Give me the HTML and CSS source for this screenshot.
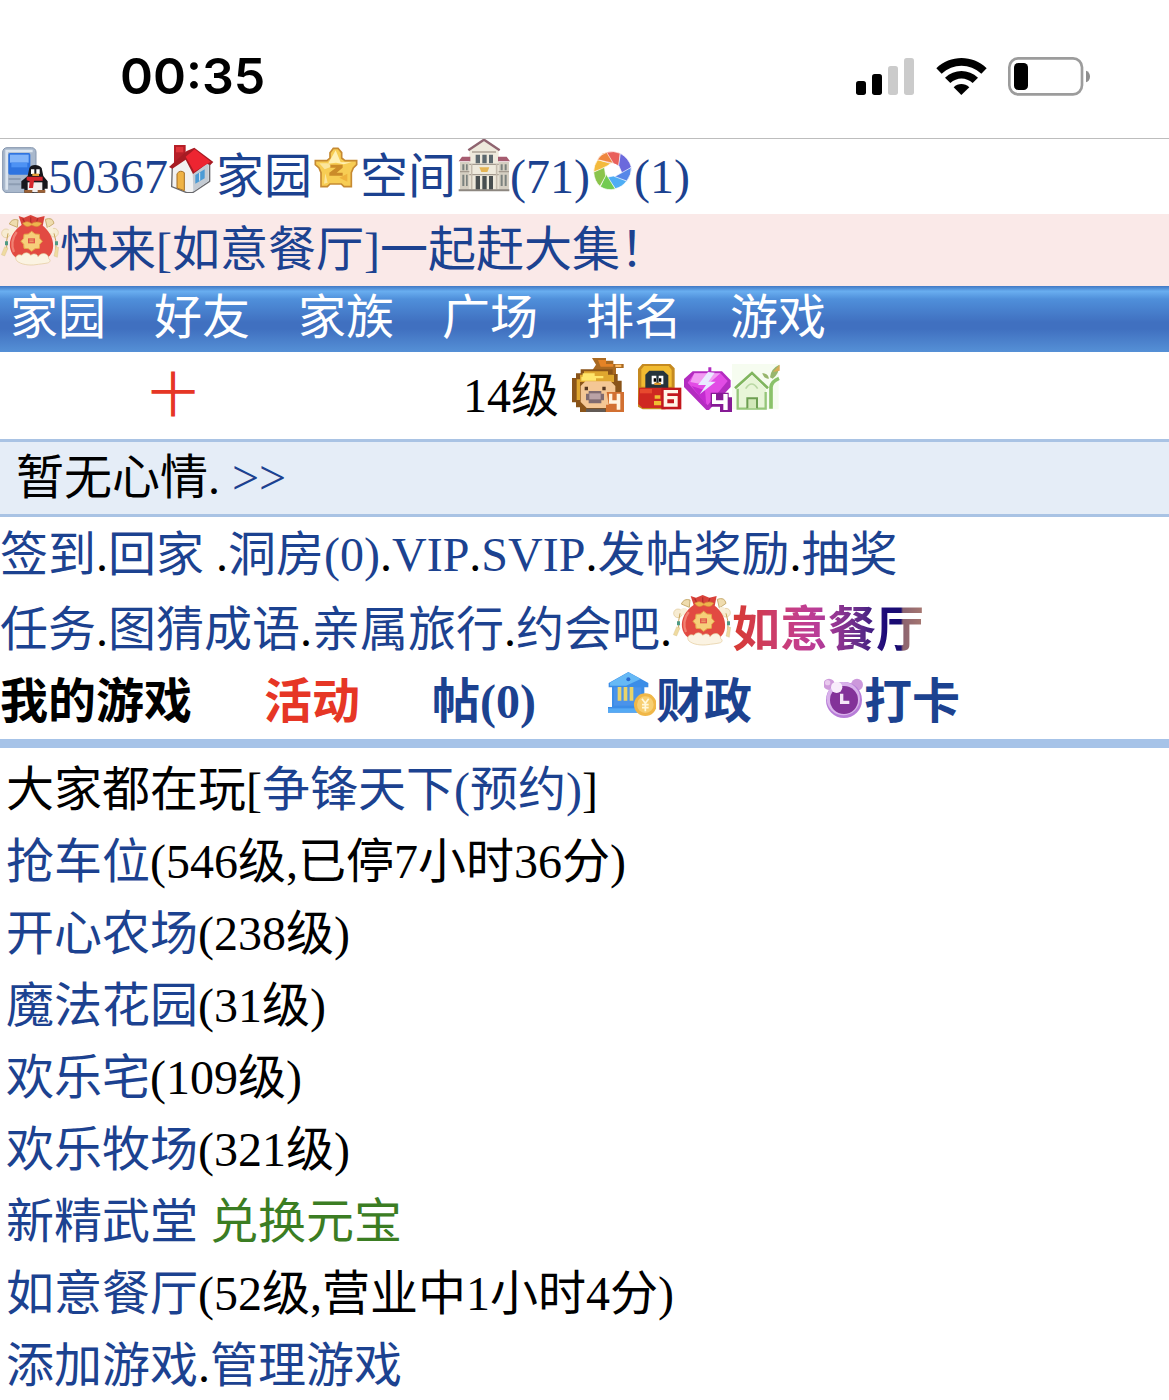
FILE: index.html
```
<!DOCTYPE html>
<html lang="zh-CN">

<head>
<title>家园</title>
<meta charset="UTF-8">
<meta name="viewport" content="width=device-width">
<link rel="stylesheet" href="styles.css">
</head>

<body>

	<svg class="defs" aria-hidden="true">
		<symbol id="bag" viewBox="0 252 180 156">
			<path d="M28 282q8-18 26-12l-2 22zM136 268q22-8 26 12l-20 14z" fill="#efdcae" stroke="#c9ad70" stroke-width="3"/>
			<circle cx="18" cy="310" r="13" fill="#f7ecd2" stroke="#dfc796" stroke-width="2"/><circle cx="36" cy="305" r="11" fill="#f9efd9"/>
			<circle cx="162" cy="308" r="13" fill="#f7ecd2" stroke="#dfc796" stroke-width="2"/><circle cx="150" cy="300" r="10" fill="#f9efd9"/>
			<path d="M24 310q-6 20-4 50M162 310q8 20 6 50" fill="none" stroke="#c9a55a" stroke-width="3"/>
			<path d="M15 334h9v12h-9zM165 334h9v12h-9z" fill="#4f9a84"/>
			<path d="M14 350l-10 24 10 4 10-24zM168 350l-6 28 10 4 4-30z" fill="#efdba0" stroke="#d2b982" stroke-width="1"/>
			<path d="M56 258l16 5 20-8 20 8 22-5-6 30H66z" fill="#d9423a"/>
			<path d="M66 284h58c26 18 38 44 35 70-3 26-24 40-62 40-42 0-63-14-67-42-3-26 10-50 36-68z" fill="#e24a42"/>
			<path d="M50 306c-14 18-17 42-8 60" fill="none" stroke="#f18072" stroke-width="7"/>
			<path d="M68 265l8 16M92 262v18M114 264l-6 16" stroke="#b52f2b" stroke-width="4"/>
			<path d="M68 280q14-10 27 1 14-10 30-1-10 16-30 5-16 11-27-5z" fill="#efb44e" stroke="#d8923a" stroke-width="2"/>
			<path d="M95 304l10 8 13 1 1 12 8 9-8 9-1 12-13 1-10 8-10-8-13-1-1-12-8-9 8-9 1-12 13-1z" fill="#f6cf7a" stroke="#e6a84a" stroke-width="3"/>
			<path d="M84 325h21v15H84z" fill="#e2574a"/><path d="M88 330h13M88 335h13" stroke="#f6cf7a" stroke-width="2"/>
			<path d="M50 392c-8-12 4-22 16-16 8-12 22-8 26 0 10-8 20-4 22 4 12-16 32-10 32 6 8 4 4 12-4 13-14 3-24 3-34 5-20 3-46 0-58-12z" fill="#fbf3e2" stroke="#e2c998" stroke-width="2"/>
		</symbol>
	</svg>

	<div id="status">
		<span class="time">00:35</span>
		<svg class="signal" viewBox="45 48 180 117"><g fill="#000"><rect x="48" y="120" width="30" height="42" rx="8"/><rect x="96" y="99" width="30" height="63" rx="8"/></g><g fill="#cbcbcb"><rect x="144" y="75" width="30" height="87" rx="8"/><rect x="192" y="51" width="30" height="111" rx="8"/></g></svg>
		<svg class="wifi" viewBox="288 48 153 117"><path d="M289 82c42-41 109-41 151 0l-16 16c-34-32-85-32-119 0z"/><path d="M315 110c28-27 71-27 99 0l-16 16c-20-18-47-18-67 0z"/><path d="M341 139c13-13 33-13 47 0l-24 23z"/></svg>
		<svg class="battery" viewBox="507 45 249 123"><rect x="511" y="52" width="218" height="108" rx="27" fill="none" stroke="#9c9c9c" stroke-width="8"/><rect x="525" y="66" width="42" height="81" rx="13"/><path d="M741 89c16 4 16 31 0 35z" fill="#8e8e8e"/></svg>
	</div>

	<div id="header">
		<a href="#"><svg class="icon i48" viewBox="0 45 144 144">
			<rect x="8" y="53" width="100" height="135" rx="13" fill="#a9b8cc" stroke="#8596ae" stroke-width="3"/>
			<path d="M16 59h82v8H24v112h-8z" fill="#dce5ef"/>
			<rect x="25" y="69" width="66" height="65" rx="5" fill="#2f74e0"/><path d="M30 74h56v24H30z" fill="#82b5fa"/><path d="M34 98h48v14H34z" fill="#4d92f4"/>
			<path d="M26 144h36v6H26zM26 160h36v6H26z" fill="#8d9db3"/>
			<path d="M88 114q4-9 17-9t20 9l5 24 13 16v22h-9v12H73v-12h-9v-22l19-16z" fill="#17171c"/>
			<path d="M93 118h10v14H93zM109 118h10v14h-10z" fill="#fff"/><path d="M97 131h20v7H97z" fill="#e5a03a"/>
			<path d="M83 157h44v29H83z" fill="#f3eeee"/><path d="M80 140h48v12h-26l-3 22H87l2-20-9-3z" fill="#d5262d"/>
			<path d="M73 180h24v8H73zM113 180h23v8h-23z" fill="#9b6136"/>
		</svg></a><a href="#">50367</a><a href="#"><svg class="icon i48" viewBox="504 45 144 144">
			<path d="M517 108l42-28 70 24v50l-51 34h-18l-45-18z" fill="#f2f2f2" stroke="#68686c" stroke-width="4"/>
			<path d="M578 128l48-30v55l-46 32z" fill="#c4cbd3"/><path d="M586 135l28-17v27l-28 16z" fill="#4b9bd5"/><path d="M599 128v24" stroke="#e8eef2" stroke-width="3"/>
			<path d="M531 174v-43q10-13 22-3v54z" fill="#efb345" stroke="#a56f24" stroke-width="3"/>
			<path d="M522 45h35v30l-35 30z" fill="#b61f28"/><path d="M528 51h22v16h-22z" fill="#df343a"/>
			<path d="M507 111l53-48 23-10 57 43-9 9-10-4-42 31-22-43-40 27z" fill="#a71b23"/>
			<path d="M557 80l27-22 48 37-49 30z" fill="#ed2531"/>
		</svg>家园</a><a href="#"><svg class="icon i48" viewBox="36 45 144 144">
			<path d="M100 55h14l11 13v16l10 8h35v12l-10 10-6 14v42h-22l-8-8h-34l-8 8H63v-42l-6-14-11-10V92h35l9-8V68z" fill="#f7cd54" stroke="#c68a32" stroke-width="5"/>
			<path d="M107 61l15 36h33l-24 6-23-5-24 3z" fill="#fff0b4"/>
			<path d="M58 100h24l16 9-24 9zM76 130l7 28-11 3z" fill="#fbe69d"/>
			<path d="M91 104h37v9l-18 15h18v9H88v-9l20-15H91z" fill="#cb8b29"/><path d="M118 143l24 12v-24z" fill="#eeb23c"/>
		</svg>空间</a><a href="#"><svg class="icon i54" viewBox="468 27 162 162">
			<path d="M480 96h147v85H480z" fill="#d5cfc2"/><path d="M508 58l44-25 44 25v121h-88z" fill="#eee9dc"/>
			<path d="M505 61l47-32 47 32" fill="none" stroke="#8f6470" stroke-width="7"/><path d="M516 66h72" stroke="#a69a8e" stroke-width="4"/>
			<path d="M476 94l10-14h25v14zM594 94V80h26l10 14z" fill="#a65c70"/>
			<path d="M527 74h13v26h-13zM547 74h13v26h-13zM567 74h12v26h-12z" fill="#5c686e"/>
			<path d="M508 103h88M508 134h88M480 125h28M596 125h31" stroke="#a49b90" stroke-width="4"/>
			<path d="M487 103h6v18h-6zM498 103h5v18h-5zM602 103h6v18h-6zM614 103h6v18h-6zM487 134h6v34h-6zM498 134h5v34h-5zM602 134h6v34h-6zM614 134h6v34h-6z" fill="#7b827e"/>
			<path d="M538 112h30l-6 14h-18z" fill="#e5b555"/>
			<path d="M527 138h13v41h-13zM547 138h13v41h-13zM567 138h12v41h-12z" fill="#484e50"/>
			<path d="M515 102v76M590 102v76" stroke="#c4bbae" stroke-width="5"/><path d="M476 178h152v6H476z" fill="#8d8780"/>
		</svg>(71)</a><a href="#"><svg class="icon i44" viewBox="870 57 132 132">
			<g stroke="#fff" stroke-width="2">
				<path d="M919 67q22-6 42 3l-4 38-20-9-24 2z" fill="#e9605b"/>
				<path d="M961 70q25 14 33 41l-26 23-12-28z" fill="#6b69dc"/>
				<path d="M994 112q1 22-14 42l-40-12 22-12z" fill="#5687e8"/>
				<path d="M980 153q-13 18-34 23l-26-34 20-4z" fill="#4eadf4"/>
				<path d="M946 177q-25 6-45-7l17-38z" fill="#72cb52"/>
				<path d="M900 169q-17-15-19-43l32-16 4 28z" fill="#8bc44b"/>
				<path d="M881 126q0-20 12-37l42 12-30 15z" fill="#f3ba3c"/>
				<path d="M892 89q10-17 28-22l20 33z" fill="#ef863e"/>
			</g>
			<path d="M927 103l20-1 11 17-10 18-20 2-12-18z" fill="#fff"/>
		</svg>(1)</a>
	</div>

	<div id="notice">
		<a href="#"><svg class="icon bag"><use href="#bag"/></svg>快来[如意餐厅]一起赶大集！</a>
	</div>

	<nav id="navigation">
		<a href="#">家园</a>
		<a href="#">好友</a>
		<a href="#">家族</a>
		<a href="#">广场</a>
		<a href="#">排名</a>
		<a href="#">游戏</a>
	</nav>

	<div id="profile">
		<span class="red">十</span>
		<div>14级 <svg class="icon monkey" viewBox="396 24 156 162">
			<path d="M456 24h42v8h22v10h31v12h-23v18h-60l-12-10 12-18z" fill="#a96921"/>
			<path d="M474 30h24v12h22v8h-38z" fill="#e48326"/><path d="M526 44h18v7h-18z" fill="#ffc06a"/>
			<path d="M396 84h12V70h14V58h96v14h15v20h12v70h-12v24H420v-14h-12v-15h-12z" fill="#8a5419"/>
			<path d="M410 88h10V74h12V64h72v10h18v22H420v54h-10z" fill="#dfa72f"/><path d="M428 70h36v8h26v7h-22v7h-44V80h4z" fill="#ffe66b"/>
			<path d="M422 108l14-14h76l14 14v46l-18 20h-68l-18-18z" fill="#f4c795"/>
			<path d="M434 110h10v11h-10zM487 110h10v11h-10z" fill="#553722"/>
			<path d="M446 123h38v8h8v20h-8v9h-38v-9h-8v-20h8z" fill="#806b70"/><path d="M448 130h34v18h-34z" fill="#baa2a5"/>
			<path d="M438 176h58v10h-58z" fill="#625a55"/>
			<path d="M500 126h52v60h-54v-22h8z" fill="#d27031"/><path d="M507 131h10v20h13v-20h11v48h-11v-18h-23z" fill="#fff3df"/>
		</svg> <svg class="icon i46" viewBox="594 42 138 144">
			<path d="M607 42h84l13 13v62h-12v58l-18 3h-66l-14-8V57z" fill="#c58a20"/>
			<path d="M612 48h74l9 12v50h-91V58z" fill="#f1bb31"/><path d="M616 74l12-12h42l15 14v38h-69z" fill="#26343b"/>
			<path d="M635 77h14v26h-14zM656 77h14v26h-14z" fill="#fff"/><path d="M641 85h7v10h-7zM657 85h7v10h-7z"/><path d="M643 98h20v7h-20z" fill="#d99525"/>
			<path d="M597 113h70v61h-60l-12-12z" fill="#cf2821"/><path d="M600 117h36v13h-36z" fill="#e74a2e"/><path d="M644 136h17v10h-17zM642 153h22v13h-22z" fill="#efbd32"/>
			<path d="M664 113h60v65h-60z" fill="#c2171c"/><path d="M671 120h43v10h-32v8h31v32h-42zM682 148v12h20v-12z" fill="#fff5e7" fill-rule="evenodd"/>
		</svg><svg class="icon i48" viewBox="732 42 144 144">
			<path d="M758 64h47V52h9v12h32l26 27v20l-65 69h-8l-68-70V88z" fill="#b32cc0"/>
			<path d="M763 70h78l22 23-60 73-60-68z" fill="#e24be5"/><path d="M763 70l-12 26 50 10 40-36z" fill="#f29bf3"/><path d="M755 108l44 58-4-45z" fill="#c32bd0"/>
			<path d="M804 66l-30 39h24l-19 28 48-38h-22l19-27z" fill="#e9eaff"/>
			<path d="M812 128h54v14h10v44h-36v-16h-28z" fill="#861a95"/><path d="M816 132h12v19h22v-19h13v48h-13v-18h-34z" fill="#fff"/>
		</svg><svg class="icon i48" viewBox="876 42 144 144">
			<path d="M876 42h140v136H876z" fill="#f6fcf0"/>
			<path d="M885 115l51-46 48 46" fill="none" stroke="#80b55f" stroke-width="8"/>
			<path d="M893 117l43-41 42 41v61h-85z" fill="#e8f5d8"/><path d="M893 116v60h84v-50" fill="none" stroke="#95c679" stroke-width="7"/>
			<path d="M922 175v-30h29v30" fill="#d2e8b9" stroke="#6d9e52" stroke-width="6"/><path d="M917 116q18-28 36 0" fill="none" stroke="#b9d8a4" stroke-width="5"/>
			<path d="M993 176v-65q2-17 24-26" fill="none" stroke="#8ac269" stroke-width="11"/><path d="M986 82q-4-12-19-13 3 16 19 18zM990 82q2-26 28-38 0 27-20 42z" fill="#97b66d"/><path d="M999 66l20-22v18z" fill="#d8ac56"/>
		</svg></div>
	</div>

	<div id="mood">暂无心情. <a href="#">&gt;&gt;</a></div>

	<div id="links">
		<div><a href="#">签到</a>.<a href="#">回家</a> .<a href="#">洞房(0)</a>.<a href="#">VIP</a>.<a href="#">SVIP</a>.<a href="#">发帖奖励</a>.<a href="#">抽奖</a></div>
		<div><a href="#">任务</a>.<a href="#">图猜成语</a>.<a href="#">亲属旅行</a>.<a href="#">约会吧</a>.<a href="#"><svg class="icon bag"><use href="#bag"/></svg><b class="rainbow">如意餐厅</b></a></div>
	</div>

	<div id="tabs">
		<span>我的游戏</span>
		<a href="#" class="red">活动</a>
		<a href="#">帖(0)</a>
		<a href="#"><svg class="icon i48" viewBox="54 240 144 144">
			<path d="M56 279l59-33 60 33v13h-12v58h14v18H54v-17h12v-59H56z" fill="#3b8de7"/>
			<path d="M60 278l55-31 37 20-44 20H60z" fill="#66b9f5"/><path d="M72 292h82v55H72z" fill="#4a93ea"/><circle cx="115" cy="268" r="6" fill="#2869d1"/>
			<path d="M83 291h11v41H83zM101 291h11v41h-11zM119 291h11v41h-11z" fill="#e9d46b"/><path d="M54 355h91v12H54z" fill="#55aaf4"/>
			<circle cx="166" cy="344" r="34" fill="#f0b748"/><circle cx="166" cy="344" r="25" fill="#f7ce70"/>
			<path d="M156 326l10 14 10-14M166 340v24M156 344h20M156 353h20" fill="none" stroke="#fff7d9" stroke-width="5"/>
		</svg>财政</a>
		<a href="#"><svg class="icon i40" viewBox="702 264 120 120">
			<circle cx="717" cy="283" r="17" fill="#cf9adb"/><circle cx="801" cy="284" r="18" fill="#cc98db"/><circle cx="713" cy="278" r="8" fill="#e9c9ee"/>
			<circle cx="762" cy="330" r="54" fill="#b77cd8"/><circle cx="760" cy="326" r="50" fill="#d9b2eb"/><circle cx="762" cy="330" r="42" fill="#833299"/>
			<circle cx="740" cy="292" r="17" fill="#f8ecfb"/><path d="M755 311v26h23" fill="none" stroke="#f4e5f7" stroke-width="10"/>
		</svg>打卡</a>
	</div>

	<div id="games">
		<div>大家都在玩[<a href="#">争锋天下(预约)</a>]</div>
		<div><a href="#">抢车位</a>(546级,已停7小时36分)</div>
		<div><a href="#">开心农场</a>(238级)</div>
		<div><a href="#">魔法花园</a>(31级)</div>
		<div><a href="#">欢乐宅</a>(109级)</div>
		<div><a href="#">欢乐牧场</a>(321级)</div>
		<div><a href="#">新精武堂</a> <a href="#" class="green">兑换元宝</a></div>
		<div><a href="#">如意餐厅</a>(52级,营业中1小时4分)</div>
		<div><a href="#">添加游戏</a>.<a href="#">管理游戏</a></div>
	</div>

</body>
</html>
```
FILE: styles.css
```
body {
	margin: 0;
	background: #fff;
	color: #000;
	font: 48px/72px "Liberation Serif", "Noto Sans CJK SC", sans-serif;
	font-kerning: none;
}
a {
	color: #1c4290;
	text-decoration: none;
}
.red {
	color: #e63625;
}
.green {
	color: #3b7d23;
}
.defs {
	display: none;
}

/* icons sit on the text baseline */
.icon {
	width: 48px;
	height: 48px;
}
.i40 {
	width: 40px;
	height: 40px;
}
.i44 {
	width: 44px;
	height: 44px;
}
.i46 {
	width: 46px;
}
.i54 {
	width: 54px;
	height: 54px;
}
.monkey {
	width: 52px;
	height: 54px;
	margin: 0 2px 0 1px;
}
.bag {
	width: 60px;
	height: 52px;
}

#status {
	display: flex;
	align-items: center;
	gap: 21px;
	padding: 46px 78px 32px 120px;
	line-height: 60px;
}
#status .time {
	margin-right: auto;
	font-family: Inter, sans-serif;
	font-size: 50px;
	font-weight: 600;
	font-kerning: auto;
}
.signal {
	width: 60px;
	height: 39px;
}
.wifi {
	width: 51px;
	height: 39px;
}
.battery {
	width: 83px;
	height: 41px;
}

#header {
	padding-bottom: 1px;
	border-top: 1px solid #bdbdbd;
}

#notice {
	background: #fae9e8;
}

#navigation {
	display: flex;
	gap: 48px;
	padding: 0 10px 2px;
	line-height: 64px;
	background: linear-gradient(#4078c4, #69aef0 8%, #4f8fda 20%, #4070c0 55%, #4070c0 65%, #5590d6);
}
#navigation a {
	color: #fff;
}

#profile {
	display: flex;
	gap: 266px;
	align-items: baseline;
	padding: 6px 0 7px 149px;
}

#mood {
	padding-left: 16px;
	border: solid #a9c3e4;
	border-width: 3px 0;
	background: #e5edf7;
}

#links {
	display: grid;
	gap: 3px;
	padding-top: 2px;
}
.rainbow {
	background: linear-gradient(90deg, #d83a30, #c43e8c 35%, #b83c98 45%, #5c2a88 68%, #1c0a78 80%, #180c70 88%, #8c6470 89%, #a87870);
	-webkit-background-clip: text;
	background-clip: text;
	color: transparent;
}

#tabs {
	display: flex;
	gap: 72px;
	padding-bottom: 1px;
	border-bottom: 9px solid #a6c3e8;
	font-weight: bold;
}
#tabs .red {
	color: #e63625;
}

#games {
	display: grid;
	gap: 8px;
	padding: 10px 6px 2px;
	line-height: 64px;
}
```
